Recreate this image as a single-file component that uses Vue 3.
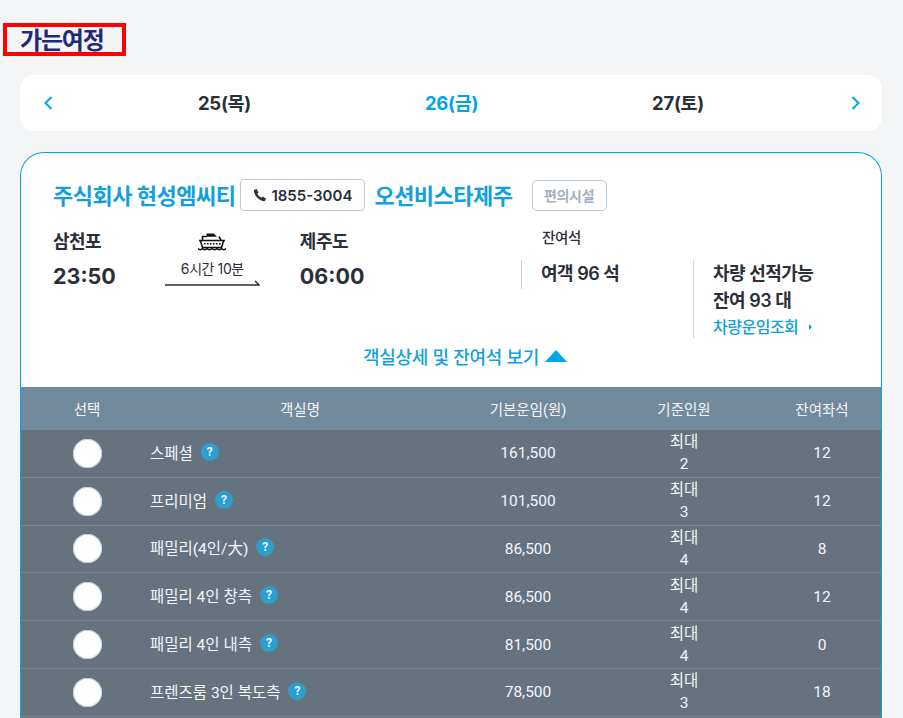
<script setup>
const dates = [
  { label: '25(목)', active: false },
  { label: '26(금)', active: true },
  { label: '27(토)', active: false }
]

const rooms = [
  { name: '스페셜', fare: '161,500', max: 2, left: 12 },
  { name: '프리미엄', fare: '101,500', max: 3, left: 12 },
  { name: '패밀리(4인/大)', fare: '86,500', max: 4, left: 8 },
  { name: '패밀리 4인 창측', fare: '86,500', max: 4, left: 12 },
  { name: '패밀리 4인 내측', fare: '81,500', max: 4, left: 0 },
  { name: '프렌즈룸 3인 복도측', fare: '78,500', max: 3, left: 18 }
]
</script>

<template>
  <div class="page">
    <h2 class="page-title">가는여정</h2>

    <div class="date-bar">
      <svg class="chevron" width="10" height="14" viewBox="0 0 10 14">
        <path d="M8.5 1 2.5 7l6 6" />
      </svg>
      <div class="dates">
        <span
          v-for="d in dates"
          :key="d.label"
          class="date"
          :class="{ active: d.active }"
        >{{ d.label }}</span>
      </div>
      <svg class="chevron" width="10" height="14" viewBox="0 0 10 14">
        <path d="M1.5 1 7.5 7l-6 6" />
      </svg>
    </div>

    <section class="card">
      <div class="card-body">
        <div class="company">
          <span class="company-name">주식회사 현성엠씨티</span>
          <span class="phone">
            <svg width="14" height="14" viewBox="0 0 24 24">
              <path d="M6.2 1.8 9.4 7.6 7.300 10a15 15 0 0 0 6.700 6.700l2.400-2.100 5.800 3.200-1.400 3.600c-.4 1-1.400 1.400-2.400 1.200C10 20.700 3.300 14 1.400 5.600 1.200 4.600 1.600 3.600 2.600 3.200z" />
            </svg>
            1855-3004
          </span>
          <span class="company-name">오션비스타제주</span>
          <span class="facility">편의시설</span>
        </div>

        <div class="schedule">
          <div class="route">
            <div class="port">
              <div class="port-name">삼천포</div>
              <div class="port-time">23:50</div>
            </div>
            <div class="duration">
              <svg class="ship" width="28" height="18" viewBox="0 0 28 18">
                <path class="ship-line" d="M4.500 7V3.500h4.500M21 3.500 23 7" />
                <path class="ship-fill" d="M8.500 3.800V.5h7.200l3.300 3.300z" />
                <path class="ship-line" d="M1 7.500h26M2.500 8l2 6.500h19l2-6.500" />
                <path class="ship-dots" d="M6 10h1.600v1.600H6zM9 10h1.600v1.600H9zM12 10h1.600v1.600H12zM15 10h1.600v1.600H15zM18 10h1.600v1.600H18zM21 10h1.600v1.600H21z" />
                <path class="ship-line" d="M0 15.500c1.500 1.600 3 1.600 4.500 0 1.500 1.600 3 1.600 4.500 0 1.500 1.600 3.300 1.600 5 0 1.700 1.600 3.500 1.600 5 0 1.500 1.600 3 1.600 4.500 0 1.500 1.600 3 1.600 4.500 0" />
              </svg>
              <div class="duration-text">6시간 10분</div>
              <svg class="arrow" width="95" height="6" viewBox="0 0 95 6">
                <path d="M0 5h94L90 1" />
              </svg>
            </div>
            <div class="port">
              <div class="port-name">제주도</div>
              <div class="port-time">06:00</div>
            </div>
          </div>

          <div class="seats">
            <div class="seats-label">잔여석</div>
            <div class="seats-row">
              <div class="seat-info passenger">여객 96 석</div>
              <div class="seat-info vehicle">
                <div>차량 선적가능</div>
                <div>잔여 93 대</div>
                <div class="vehicle-link">
                  차량운임조회
                  <i class="mini-arrow"></i>
                </div>
              </div>
            </div>
          </div>
        </div>

        <div class="toggle">
          객실상세 및 잔여석 보기
          <i class="toggle-arrow"></i>
        </div>
      </div>

      <div class="room-table">
        <div class="room-row room-head">
          <div class="cell-select">선택</div>
          <div>객실명</div>
          <div>기본운임(원)</div>
          <div>기준인원</div>
          <div>잔여좌석</div>
        </div>
        <div v-for="room in rooms" :key="room.name" class="room-row">
          <div class="cell-select"><span class="radio"></span></div>
          <div class="cell-name">
            {{ room.name }}
            <span class="help">?</span>
          </div>
          <div>{{ room.fare }}</div>
          <div class="cell-max">최대<br />{{ room.max }}</div>
          <div>{{ room.left }}</div>
        </div>
      </div>
    </section>
  </div>
</template>

<style>
html, body {
  margin: 0;
  background: #f4f5f7;
  overflow: hidden;
}
</style>

<style scoped>
.page {
  height: 718px;
  overflow: hidden;
  padding: 23px 21px 0 20px;
  box-sizing: border-box;
  font-family: Inter, "Noto Sans CJK KR", sans-serif;
  color: #2b2f38;
}

.page-title {
  width: 123px;
  margin: 0 0 19px -17px;
  padding: 0 0 0 13px;
  height: 33px;
  box-sizing: border-box;
  border: 4px solid #f00;
  font-size: 24px;
  font-weight: 700;
  line-height: 27px;
  letter-spacing: -1.200px;
  color: #1f2a7c;
}

.date-bar {
  display: flex;
  align-items: center;
  justify-content: space-between;
  height: 56px;
  padding: 0 21px 0 23px;
  background: #fff;
  border-radius: 14px;
}

.chevron path {
  fill: none;
  stroke: #00a5e5;
  stroke-width: 2;
}

.dates {
  display: flex;
  flex: 1;
  padding: 0 147px 2px 145px;
  justify-content: space-between;
}

.date {
  font-size: 18.500px;
  font-weight: 700;
  letter-spacing: -0.300px;
}

.date.active {
  color: #00a5e5;
}

.card {
  margin-top: 21px;
  background: #fff;
  border: 1px solid #00a5e5;
  border-bottom: 0;
  border-radius: 24px 24px 0 0;
  overflow: hidden;
}

.card-body {
  height: 234px;
  padding: 26px 31px 0 32px;
  box-sizing: border-box;
}

.company {
  display: flex;
  align-items: center;
  height: 32px;
}

.company-name {
  margin-bottom: 3px;
  font-size: 22px;
  font-weight: 700;
  letter-spacing: -0.500px;
  color: #129fe0;
}

.phone {
  display: flex;
  align-items: center;
  gap: 4px;
  height: 32px;
  margin: 0 9px 0 5px;
  padding: 0 12px;
  box-sizing: border-box;
  background: #fff;
  border: 1px solid #bcc8d8;
  border-radius: 4px;
  font-size: 15px;
  font-weight: 600;
}

.phone svg {
  fill: #2b2f38;
}

.facility {
  display: flex;
  align-items: center;
  justify-content: center;
  width: 75px;
  height: 31px;
  margin-left: 19px;
  box-sizing: border-box;
  border: 1px solid #bcc8d8;
  border-radius: 5px;
  font-size: 14px;
  font-weight: 600;
  letter-spacing: -0.300px;
  color: #a3aec4;
}

.schedule {
  display: flex;
  margin-top: 17px;
}

.route {
  display: flex;
  width: 468px;
}

.port {
  padding-top: 1px;
}

.port-name {
  height: 26px;
  font-size: 18px;
  font-weight: 600;
  line-height: 26px;
  letter-spacing: -0.500px;
}

.port-time {
  margin-top: 7px;
  font-size: 21.500px;
  font-weight: 700;
  line-height: 28px;
}

.duration {
  display: flex;
  flex-direction: column;
  align-items: center;
  width: 95px;
  margin: 0 40px 0 49px;
}

.ship {
  display: block;
  margin-top: 5px;
}

.ship-line {
  fill: none;
  stroke: #111;
  stroke-width: 1.600;
}

.ship-fill,
.ship-dots {
  fill: #111;
}

.duration-text {
  margin-top: 9px;
  font-size: 14px;
  line-height: 17px;
  letter-spacing: -0.400px;
  white-space: nowrap;
}

.arrow {
  display: block;
  margin-top: 3px;
}

.arrow path {
  fill: none;
  stroke: #2b2f38;
  stroke-width: 1.500;
}

.seats {
  flex: 1;
}

.seats-label {
  margin: 0 0 12px 21px;
  font-size: 14.500px;
  font-weight: 500;
  line-height: 20px;
  letter-spacing: -0.400px;
}

.seats-row {
  display: flex;
  align-items: flex-start;
}

.seat-info {
  box-sizing: border-box;
  padding-left: 19px;
  border-left: 1px solid #ccd5e0;
  font-size: 18px;
  font-weight: 600;
  letter-spacing: -0.500px;
}

.passenger {
  width: 172px;
  height: 29px;
  line-height: 28px;
}

.vehicle {
  height: 78px;
  padding-top: 1px;
  line-height: 26.500px;
  white-space: nowrap;
}

.vehicle-link {
  display: flex;
  align-items: center;
  font-size: 16px;
  font-weight: 500;
  line-height: 26px;
  letter-spacing: -0.500px;
  color: #129fe0;
}

.mini-arrow {
  width: 0;
  height: 0;
  margin-left: 11px;
  border-left: 3px solid #129fe0;
  border-top: 3px solid transparent;
  border-bottom: 3px solid transparent;
}

.toggle {
  display: flex;
  align-items: center;
  justify-content: center;
  gap: 6px;
  height: 26px;
  margin-top: 5px;
  padding-left: 27px;
  font-size: 18px;
  font-weight: 500;
  letter-spacing: -0.300px;
  color: #129fe0;
}

.toggle-arrow {
  width: 0;
  height: 0;
  border-left: 11px solid transparent;
  border-right: 11px solid transparent;
  border-bottom: 12px solid #00a5e5;
}

.room-table {
  margin: 0 -1px;
  padding-bottom: 10px;
  background: #67727f;
  font-family: Roboto, "Noto Sans CJK KR", sans-serif;
  color: #f4f6f8;
}

.room-row {
  display: grid;
  grid-template-columns: 130px 300px 156px 156px 120px;
  align-items: center;
  height: 47.800px;
  box-sizing: border-box;
  border-bottom: 1px solid #7d8896;
  font-size: 15.500px;
  text-align: center;
}

.room-head {
  height: 43px;
  background: #728a9d;
  border-bottom: 0;
  font-size: 14.500px;
}

.cell-select {
  padding-left: 4px;
}

.radio {
  display: block;
  width: 29px;
  height: 29px;
  margin: 0 auto;
  background: #fff;
  border-radius: 50%;
  box-shadow: inset 0 0 0 1px #c8ced8;
}

.cell-name {
  display: flex;
  align-items: center;
  gap: 8px;
  font-size: 15.500px;
  margin-top: -3px;
}

.help {
  display: inline-flex;
  align-items: center;
  justify-content: center;
  width: 18px;
  height: 18px;
  background: #2a9fd0;
  border-radius: 50%;
  font-size: 12px;
  font-weight: 700;
}

.cell-max {
  line-height: 22px;
  font-size: 15.500px;
}
</style>
